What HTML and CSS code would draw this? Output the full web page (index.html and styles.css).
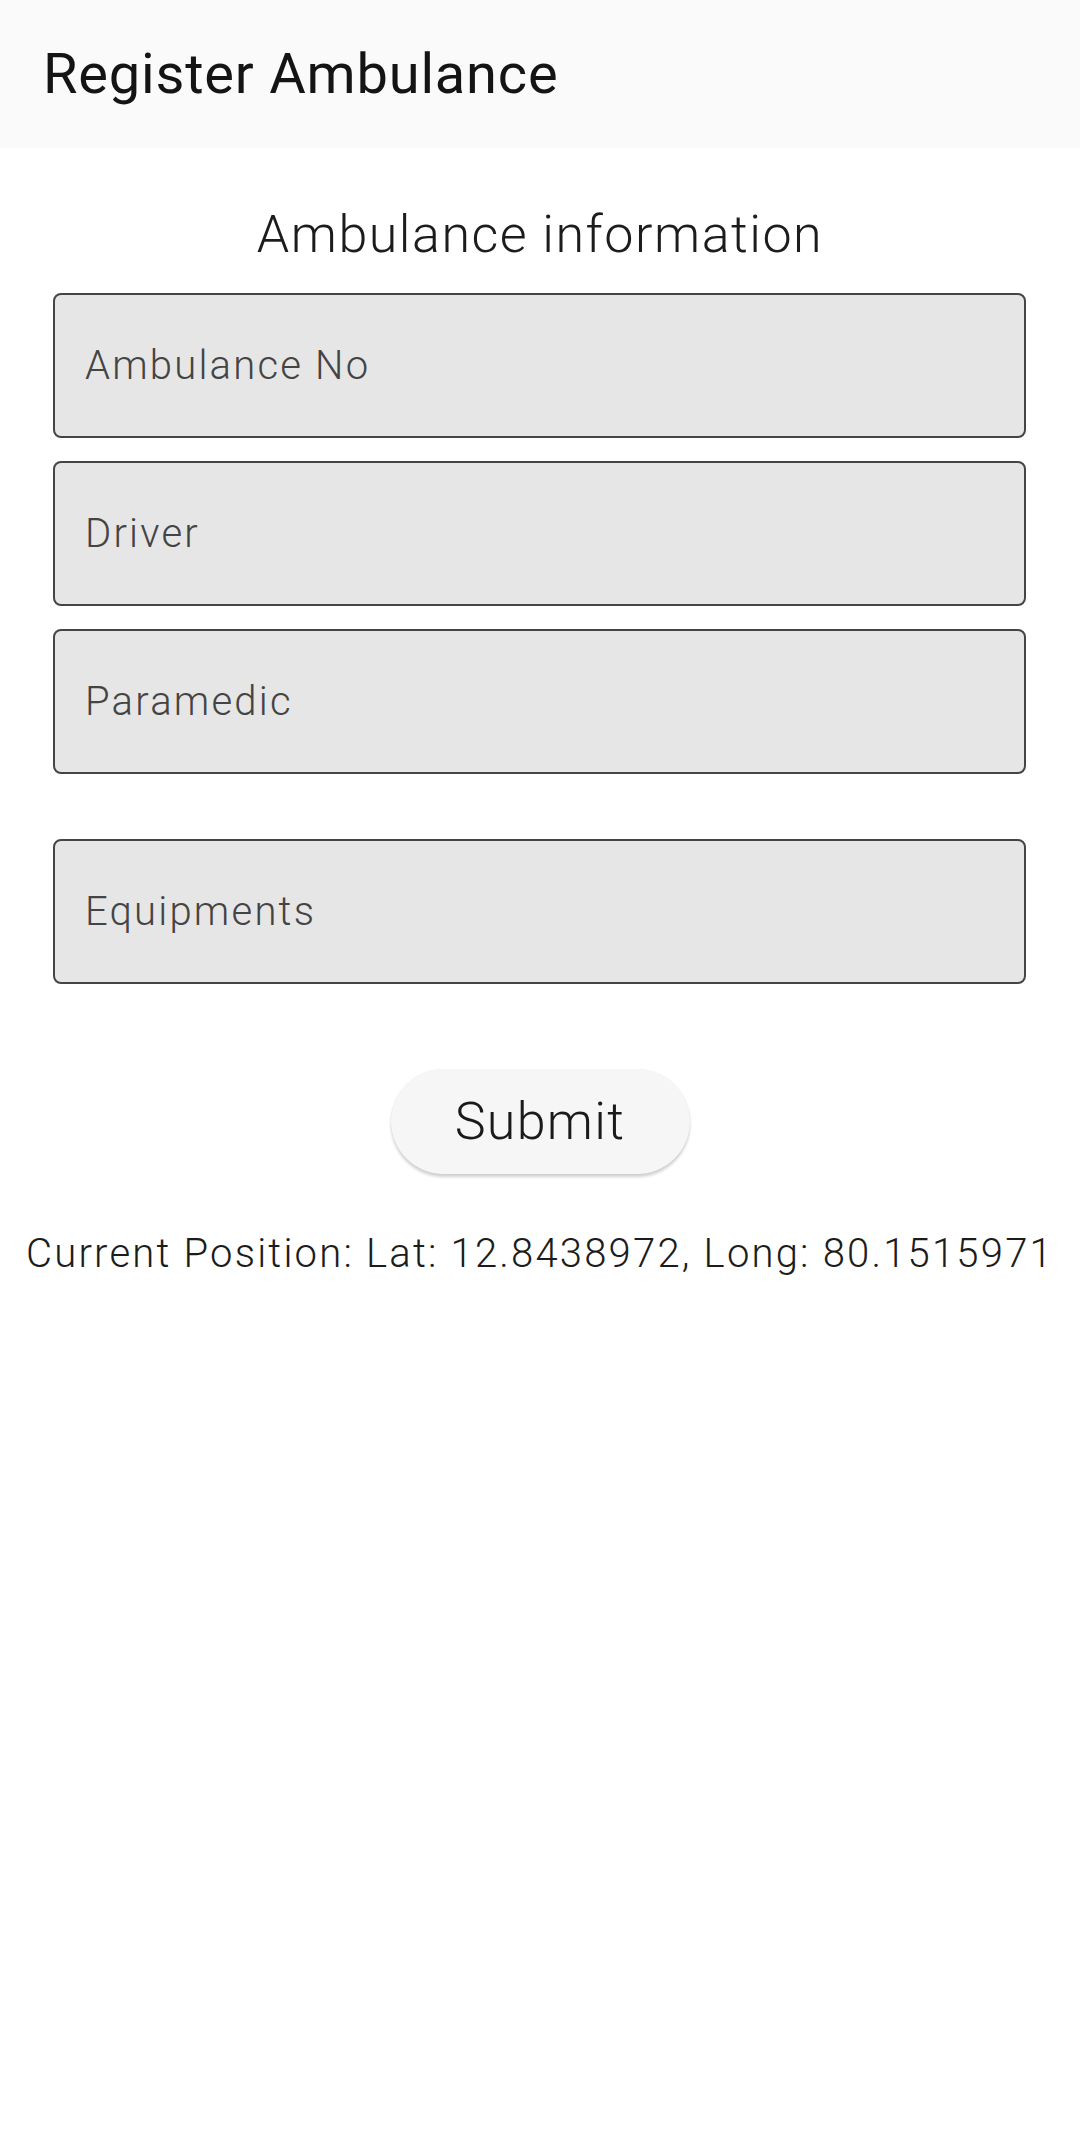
FILE: index.html
```html
<!DOCTYPE html>
<html>
<head>
<meta charset="utf-8">
<link rel="stylesheet" href="styles.css">
</head>
<body>
<header class="appbar"><h1 class="title">Register Ambulance</h1></header>
<main class="content">
  <h2 class="section-title">Ambulance information</h2>
  <div class="fields">
    <div class="field"><span class="placeholder">Ambulance No</span></div>
    <div class="field"><span class="placeholder">Driver</span></div>
    <div class="field"><span class="placeholder">Paramedic</span></div>
    <div class="field field-spaced"><span class="placeholder">Equipments</span></div>
  </div>
  <button class="submit">Submit</button>
  <p class="position">Current Position: Lat: 12.8438972, Long: 80.1515971</p>
</main>
</body>
</html>
```
FILE: styles.css
```css
* { box-sizing: border-box; }
html, body { margin: 0; padding: 0; background: #ffffff; }
body { font-family: Roboto, "Noto Sans", sans-serif; width: 1080px; }
.appbar {
  height: 148px;
  background: #fafafa;
  display: flex;
  align-items: center;
  padding-left: 43px;
}
.title {
  margin: 0;
  font-size: 56px;
  line-height: 66px;
  font-weight: 400;
  letter-spacing: 0.8px;
  color: #141414;
}
.content { display: flex; flex-direction: column; align-items: center; }
.section-title {
  margin: 57px 0 0;
  font-size: 52px;
  line-height: 60px;
  font-weight: 300;
  letter-spacing: 1.5px;
  color: #1c1c1c;
}
.fields {
  margin-top: 28px;
  width: 973px;
  margin-left: -1px;
  display: flex;
  flex-direction: column;
  gap: 23px;
}
.field {
  height: 145px;
  border: 2.5px solid #454545;
  border-radius: 8px;
  background: #e6e6e6;
  display: flex;
  align-items: center;
  padding-left: 30px;
}
.field-spaced { margin-top: 42px; }
.placeholder {
  font-size: 40px;
  line-height: 48px;
  font-weight: 300;
  letter-spacing: 2.2px;
  color: #444444;
}
.submit {
  margin-top: 85px;
  width: 299px;
  height: 105px;
  border: none;
  border-radius: 53px;
  background: #f6f6f6;
  box-shadow: 0 3px 3px rgba(0,0,0,0.18), 0 0 1px rgba(0,0,0,0.08);
  font-family: Roboto, "Noto Sans", sans-serif;
  font-size: 52px;
  line-height: 60px;
  font-weight: 300;
  letter-spacing: 1.3px;
  color: #1a1a1a;
  padding: 0;
}
.position {
  margin: 56px 0 0;
  font-size: 40px;
  line-height: 48px;
  font-weight: 300;
  letter-spacing: 2.2px;
  color: #1c1c1c;
  white-space: nowrap;
}
```
